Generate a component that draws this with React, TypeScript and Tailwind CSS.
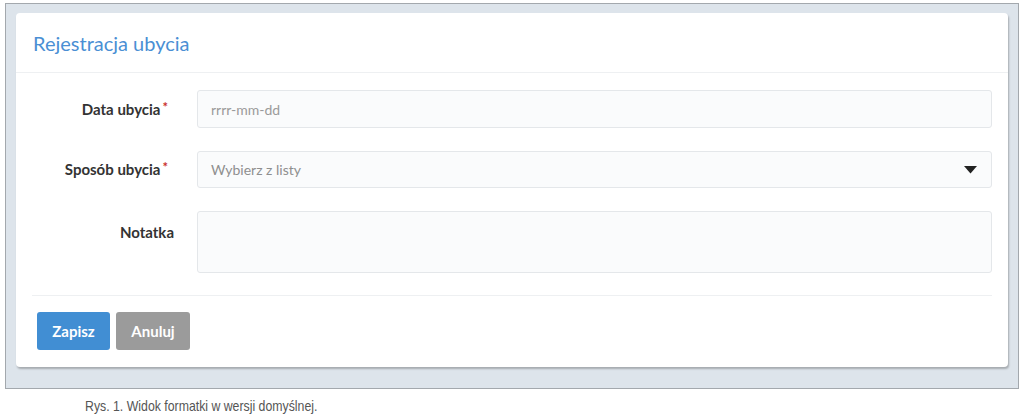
import React from 'react';

const Label: React.FC<{ text: string; required?: boolean; top?: boolean }> = ({ text, required, top }) => (
  <div className={`w-[181px] shrink-0 flex justify-end text-[15px] font-bold text-[#333] ${top ? 'items-start pt-[10px] pr-[23px]' : 'items-center pr-[29px]'}`}>
    <span className="whitespace-nowrap">
      {text}
      {required && <span className="relative top-[-3px] text-[#c9302c] ml-[2px] text-[13px]">*</span>}
    </span>
  </div>
);

const App: React.FC = () => {
  return (
    <div className="w-[1024px] h-[418px] bg-white font-['Lato','Open_Sans',sans-serif]">
      {/* Frame */}
      <div className="ml-[5px] pt-[3px]">
        <div className="w-[1014px] h-[386px] border border-[#a3a8ad] bg-[#dde4eb] pl-[10px] pt-[9px]">
          <div className="w-[992px] h-[354px] bg-white rounded-[4px] shadow-[1px_2px_2px_rgba(0,0,0,0.25)] flex flex-col">
            {/* Header */}
            <div className="h-[60px] border-b border-[#eef0f2] flex items-center pl-[17px]">
              <h1 className="text-[20px] text-[#4a8fd4] font-normal">Rejestracja ubycia</h1>
            </div>

            {/* Body */}
            <div className="pt-[17px] pr-[16px] flex flex-col gap-[23px]">
              <div className="flex h-[38px]">
                <Label text="Data ubycia" required />
                <div className="flex-1 border border-[#e4e7ea] bg-[#fafbfc] rounded-[3px] flex items-center px-[13px] text-[14px] text-[#9a9a9a]">
                  rrrr-mm-dd
                </div>
              </div>
              <div className="flex h-[37px]">
                <Label text="Sposób ubycia" required />
                <div className="flex-1 border border-[#e4e7ea] bg-[#fafbfc] rounded-[3px] flex items-center justify-between pl-[13px] pr-[14px] text-[14px] text-[#8f8f8f]">
                  <span>Wybierz z listy</span>
                  <svg width="13" height="8" viewBox="0 0 13 8">
                    <path d="M0 0 H13 L6.5 7.5 Z" fill="#222" />
                  </svg>
                </div>
              </div>
              <div className="flex h-[62px]">
                <Label text="Notatka" top />
                <div className="flex-1 border border-[#e4e7ea] bg-[#fafbfc] rounded-[3px]" />
              </div>
            </div>

            {/* Footer */}
            <div className="mx-[16px] mt-[22px] border-t border-[#eef0f2] pt-[16px] flex gap-[6px] pl-[5px]">
              <button className="w-[73px] h-[38px] rounded-[3px] bg-[#418ed3] text-white text-[15px] font-bold">
                Zapisz
              </button>
              <button className="w-[74px] h-[38px] rounded-[3px] bg-[#9b9b9b] text-white text-[15px] font-bold">
                Anuluj
              </button>
            </div>
          </div>
        </div>
      </div>

      {/* Caption */}
      <div className="pl-[85px] pt-[6px]">
        <div className="origin-left scale-x-[0.82] text-[15px] text-[#555] font-['Liberation_Sans',sans-serif] whitespace-nowrap">
          Rys. 1. Widok formatki w wersji domyślnej.
        </div>
      </div>
    </div>
  );
};

export default App;
